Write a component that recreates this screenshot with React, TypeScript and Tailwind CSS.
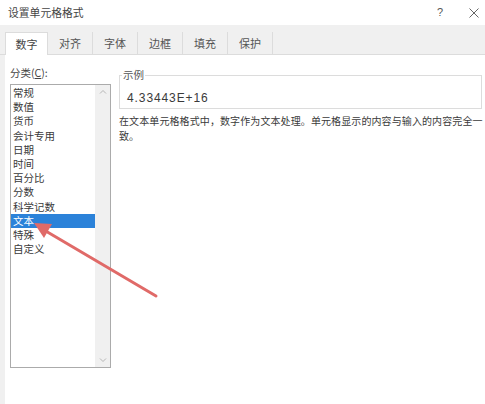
import React from "react";

const items = ["常规", "数值", "货币", "会计专用", "日期", "时间", "百分比", "分数", "科学记数", "文本", "特殊", "自定义"];
const tabs = ["数字", "对齐", "字体", "边框", "填充", "保护"];

export default function App() {
  return (
    <div
      className="relative w-[485px] h-[404px] bg-white text-[11px] text-[#3a3a3a] overflow-hidden flex flex-col"
      style={{ fontFamily: '"Noto Sans CJK SC", "Noto Sans", sans-serif' }}
    >
      {/* Title bar */}
      <div className="h-[25px] flex items-center pl-[8px] shrink-0">
        <span className="text-[10.8px] text-[#444]">设置单元格格式</span>
        <span className="ml-auto mr-[26px] text-[11px] text-[#555]" style={{ fontFamily: '"Liberation Sans", sans-serif' }}>?</span>
        <svg className="mr-[6px]" width="10" height="10" viewBox="0 0 10 10">
          <path d="M0.5 0.5 L9.5 9.5 M9.5 0.5 L0.5 9.5" stroke="#666" strokeWidth="1" />
        </svg>
      </div>
      {/* Tab strip */}
      <div className="h-[30px] bg-[#f0f0f0] flex items-end pl-[5px] border-b border-[#dcdcdc] shrink-0">
        {tabs.map((t, i) => (
          <div
            key={t}
            className={
              i === 0
                ? "w-[43px] h-[23px] bg-white border-t border-l border-r border-[#dcdcdc] -mb-px flex items-center justify-center text-[#444]"
                : "w-[45px] h-[22px] border-r border-[#dcdcdc] flex items-center justify-center text-[#555]"
            }
          >
            {t}
          </div>
        ))}
      </div>
      {/* Body */}
      <div className="flex-1 flex">
        <div className="w-[5px] bg-[#f0f0f0]" />
        <div className="flex-1 flex pl-[5px] pt-[10px] gap-[8px]">
          <div className="flex flex-col w-[101px]">
            <div className="h-[19px] leading-[16px] text-[10.5px] text-[#444]">
              分类(<span className="underline">C</span>):
            </div>
            <div className="h-[284px] border border-[#ababab] flex">
              <div className="flex-1 flex flex-col pt-px text-[10.5px]">
                {items.map((it) => (
                  <div
                    key={it}
                    className={
                      it === "文本"
                        ? "h-[14.2px] leading-[14.2px] pl-[2px] bg-[#2b82d9] text-white"
                        : "h-[14.2px] leading-[14.2px] pl-[2px] text-[#3a3a3a]"
                    }
                  >
                    {it}
                  </div>
                ))}
              </div>
              <div className="w-[15px] bg-[#f0f0f0] flex flex-col justify-between items-center py-[4px]">
                <svg width="8" height="5" viewBox="0 0 8 5">
                  <path d="M1 4.5 L4 1.5 L7 4.5" fill="none" stroke="#b5b5b5" strokeWidth="1" />
                </svg>
                <svg width="8" height="5" viewBox="0 0 8 5">
                  <path d="M1 0.5 L4 3.5 L7 0.5" fill="none" stroke="#b5b5b5" strokeWidth="1" />
                </svg>
              </div>
            </div>
          </div>
          <div className="flex-1 flex flex-col pt-[5px]">
            <div className="relative border border-[#dcdcdc] h-[34px] mt-[5px] mr-[3px]">
              <span className="absolute -top-[9px] left-[2px] bg-white px-px text-[10.5px] text-[#555] leading-[16px]">示例</span>
              <div
                className="pl-[7px] pt-[14px] leading-[16px] text-[12px] tracking-[0.9px] text-[#3a3a3a]"
                style={{ fontFamily: '"Liberation Sans", sans-serif' }}
              >
                4.33443E+16
              </div>
            </div>
            <div className="mt-[4px] leading-[15px] text-[10px] tracking-[0.1px] text-[#3a3a3a]">
              在文本单元格格式中，数字作为文本处理。单元格显示的内容与输入的内容完全一致。
            </div>
          </div>
        </div>
      </div>
      {/* Red arrow annotation */}
      <svg className="absolute left-0 top-0 pointer-events-none" width="485" height="404">
        <line x1="156" y1="296" x2="44" y2="230" stroke="#e06a68" strokeWidth="3" strokeLinecap="round" />
        <polygon points="34,223 52,224 44,238" fill="#e06a68" />
      </svg>
    </div>
  );
}
